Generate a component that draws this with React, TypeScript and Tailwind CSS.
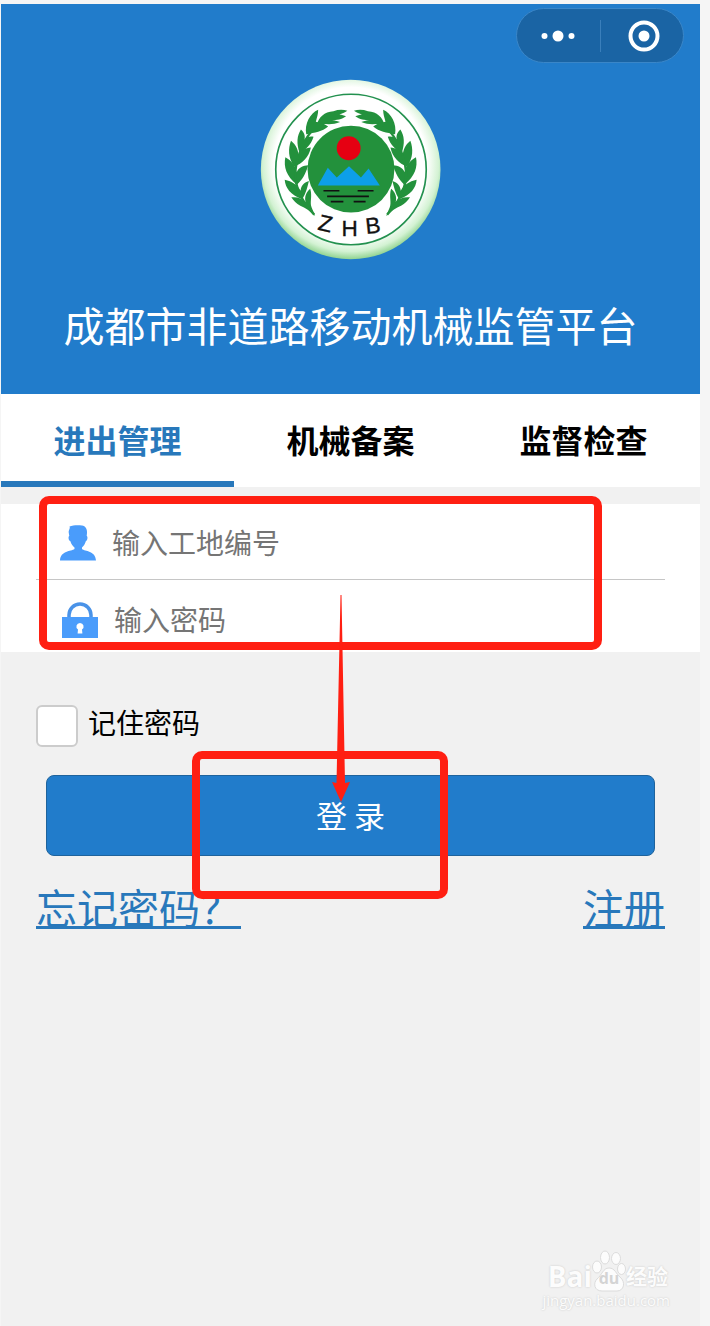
import { useState } from 'react';

const TABS = ['进出管理', '机械备案', '监督检查'];

// One side of the olive wreath, mirrored for the other side
const WREATH_LEAVES = [
  'M200 162C206 140 222 124 250 122C265 117 280 117 292 121C284 127 276 130 268 132C276 133 282 135 288 137C276 147 258 148 246 150C256 150 264 152 270 155C246 166 222 158 200 162Z',
  'M168 192C162 160 180 128 204 118C204 132 200 142 197 154C210 156 224 160 234 168C216 184 194 186 168 192Z',
  'M148 248C138 218 140 196 152 177C163 188 165 196 163 208C170 200 178 197 190 199C182 225 166 238 148 248Z',
  'M132 290C113 262 113 236 122 211C138 224 143 238 145 254C152 240 166 233 182 232C176 262 156 280 132 290Z',
  'M140 344C108 318 99 290 105 261C125 272 136 288 139 306C146 291 159 286 174 285C166 312 156 328 140 344Z',
  'M156 388C120 374 105 354 103 329C125 333 143 346 151 362C152 348 160 338 176 333C172 350 168 368 156 388Z',
  'M195 438C180 424 165 412 150 407C138 401 130 393 123 382C140 380 156 384 166 396C162 380 168 366 180 356C187 380 178 396 184 412Z',
];

function Wreath() {
  return (
    <>
      {WREATH_LEAVES.map((d) => (
        <path key={d} d={d} />
      ))}
      <path
        d="M192 434C150 390 126 340 138 284C148 236 168 190 210 158"
        fill="none"
        stroke="#23913c"
        strokeWidth="7"
      />
    </>
  );
}

function Emblem() {
  return (
    <svg viewBox="30 25 543 546" className="mt-4 h-[181px] w-[181px]" role="img" aria-label="ZHB">
      <defs>
        <radialGradient id="rim" gradientUnits="userSpaceOnUse" cx="302" cy="280" r="295">
          <stop offset="0.78" stopColor="#ffffff" />
          <stop offset="0.9" stopColor="#d3f2d3" />
          <stop offset="1" stopColor="#7fcb7f" />
        </radialGradient>
      </defs>
      <circle cx="302" cy="298" r="271" fill="url(#rim)" />
      <circle cx="303" cy="298" r="227" fill="#ffffff" stroke="#23914f" strokeWidth="5" />
      <circle cx="303" cy="297" r="131" fill="#23913c" />
      <circle cx="296" cy="234" r="36" fill="#e60012" />
      <path d="M203 346L233 293L260 322L297 288L333 322L356 295L390 346Z" fill="#0d9fe8" />
      <path
        d="M220 362H268M323 362H371M231 379H357M242 395H280M311 395H347"
        stroke="#111111"
        strokeWidth="5"
      />
      <g fill="#23913c">
        <Wreath />
        <g transform="translate(604 0) scale(-1 1)">
          <Wreath />
        </g>
      </g>
      <g
        fill="#111111"
        stroke="#111111"
        fontFamily="'Liberation Sans', Arial, sans-serif"
        fontSize="68"
        textAnchor="middle"
      >
        <text x="226" y="484" transform="rotate(13 226 460)">Z</text>
        <text x="299" y="498">H</text>
        <text x="369" y="490" transform="rotate(-6 369 466)">B</text>
      </g>
    </svg>
  );
}

function UserIcon() {
  return (
    <svg viewBox="0 0 36 36" className="size-9 shrink-0" fill="#4a9cfb" aria-hidden="true">
      <path d="M9.500 1.500C13 .2 18 0 22 .6C25.500 1.200 27.300 4 27 8L26.700 11C28 11.500 27.600 15.500 25.800 16.300C25 19.200 23.600 21 22 22.500V24C25 26.500 35.500 25.500 36 35.500H0C.5 25.500 11 26.500 14.500 24V22.500C12.600 21 11.200 19 10.400 16.300C8.400 15.500 8 11.500 9.300 11L8.700 7.500C8.500 5 10.500 3.500 9.500 1.500Z" />
    </svg>
  );
}

function LockIcon() {
  return (
    <svg viewBox="0 0 36 36" className="size-9 shrink-0" aria-hidden="true">
      <path d="M7 15.500V13A11 11 0 0 1 29 13V15.500" fill="none" stroke="#4a93e8" strokeWidth="3.500" />
      <rect y="15" width="36" height="21" fill="#4a9cfb" />
      <path
        d="M18 21A3.600 3.600 0 0 1 20 27.600L20.400 31.500H15.600L16 27.600A3.600 3.600 0 0 1 18 21Z"
        fill="#ffffff"
      />
    </svg>
  );
}

function Capsule() {
  return (
    <div className="mt-1 mr-4 flex h-[55px] w-[168px] items-center self-end rounded-full border border-[#3a86c8] bg-[#1a64a4]">
      <button type="button" aria-label="更多" className="flex h-full flex-1 items-center justify-center">
        <svg viewBox="0 0 34 12" className="h-3 w-[34px]" fill="#ffffff" aria-hidden="true">
          <circle cx="3.500" cy="6" r="3" />
          <circle cx="17" cy="6" r="5.500" />
          <circle cx="30.500" cy="6" r="3" />
        </svg>
      </button>
      <span className="h-8 w-px bg-[#3a7fbb]" />
      <button type="button" aria-label="关闭" className="flex h-full flex-1 items-center justify-center">
        <svg viewBox="0 0 32 32" className="ml-1 size-8" aria-hidden="true">
          <circle cx="16" cy="16" r="13.500" fill="none" stroke="#ffffff" strokeWidth="4" />
          <circle cx="16" cy="16" r="5.500" fill="#ffffff" />
        </svg>
      </button>
    </div>
  );
}

function Watermark() {
  return (
    <div className="mt-auto mr-[30px] mb-4 flex flex-col items-end font-['Open_Sans','Noto_Sans_CJK_SC',sans-serif] text-[#fcfcfc] [text-shadow:0_0_2px_#c4c4c4]">
      <div className="mr-0.5 flex h-10 items-end text-[28px] leading-7 font-bold">
        <span>Bai</span>
        <span className="relative flex h-10 w-[34px] items-end justify-center">
          <svg
            viewBox="0 0 34 42"
            className="absolute inset-0 h-[42px] w-[34px]"
            fill="#fcfcfc"
            stroke="#dcdcdc"
            aria-hidden="true"
          >
            <ellipse cx="5" cy="17" rx="4.500" ry="6" />
            <ellipse cx="13" cy="7.500" rx="4.500" ry="6.500" />
            <ellipse cx="24" cy="8.500" rx="4.500" ry="6" />
            <ellipse cx="29.500" cy="19" rx="4" ry="5.500" />
            <path d="M17 18C23 18 24 24 28 27C34 32 32 41 25 41H10C2 41 1 33 5 29C10 25 11 18 17 18Z" />
          </svg>
          <span className="relative text-base leading-6 text-[#d4d4d4] [text-shadow:none]">du</span>
        </span>
        <span className="text-[21px]">经验</span>
      </div>
      <div className="text-[15px] leading-5">jingyan.baidu.com</div>
    </div>
  );
}

export default function App() {
  const [activeTab, setActiveTab] = useState(0);
  const [remember, setRemember] = useState(false);

  return (
    <div className="flex min-h-screen bg-[#f5f5f5] pt-1 pr-[10px] pl-px font-['Noto_Sans_CJK_SC',sans-serif]">
      <main className="flex flex-1 flex-col bg-[#f1f1f1]">
        <header className="flex flex-col items-center bg-[#217ccb] pb-10">
          <Capsule />
          <Emblem />
          <h1 className="mt-[34px] text-[41px] leading-[60px] whitespace-nowrap text-white">
            成都市非道路移动机械监管平台
          </h1>
        </header>

        <nav className="flex bg-white">
          {TABS.map((tab, i) => (
            <button
              key={tab}
              type="button"
              onClick={() => setActiveTab(i)}
              className={`flex-1 border-b-6 pt-[21px] pb-[18px] text-[32px] leading-12 font-bold ${
                i === activeTab ? 'border-[#2878bb] text-[#2878bb]' : 'border-white text-black'
              }`}
            >
              {tab}
            </button>
          ))}
        </nav>

        <form onSubmit={(e) => e.preventDefault()}>
          <div className="relative mt-[17px] bg-white px-[35px]">
            <label className="flex items-center gap-4 border-b border-[#c6c6c6] pt-[7px] pb-1 pl-6">
              <UserIcon />
              <input
                type="text"
                aria-label="工地编号"
                placeholder="输入工地编号"
                className="h-16 min-w-0 flex-1 pb-0.5 text-[28px] outline-none placeholder:text-[#757575]"
              />
            </label>
            <label className="flex items-center gap-4 pt-2 pl-[26px]">
              <LockIcon />
              <input
                type="password"
                aria-label="密码"
                placeholder="输入密码"
                className="h-16 min-w-0 flex-1 pb-0.5 text-[28px] outline-none placeholder:text-[#757575]"
              />
            </label>
            <div className="pointer-events-none absolute -top-2 right-[98px] bottom-[2px] left-[38px] rounded-[10px] border-8 border-[#ff1f12]" />
          </div>

          <div className="px-[35px] pt-[53px]">
            <label className="flex w-fit items-center gap-[10px] text-[28px] text-black">
              <input
                type="checkbox"
                checked={remember}
                onChange={(e) => setRemember(e.target.checked)}
                className="size-[42px] appearance-none rounded-md border-2 border-[#cccccc] bg-white checked:bg-[#217ccb]"
              />
              <span className="pb-2 leading-[34px]">记住密码</span>
            </label>

            <div className="relative mx-[10px] mt-7">
              <button
                type="submit"
                className="block h-[81px] w-full rounded-lg border border-[#1f639c] bg-[#217ccb] text-[31px] text-white"
              >
                登 录
              </button>
              <div className="pointer-events-none absolute -top-6 right-[207px] -bottom-[43px] left-[146px] z-10 rounded-[10px] border-8 border-[#ff1f12]" />
              <svg
                viewBox="0 0 20 208"
                className="pointer-events-none absolute -top-[180px] left-[285px] z-10 h-[208px] w-5"
                fill="#ff1f12"
                aria-hidden="true"
              >
                <path d="M9.500 0H10.500L14 188L19 187L10 207L1 187L5.500 188Z" />
              </svg>
            </div>

            <div className="mt-[22px] flex justify-between text-[41px] leading-14 text-[#2878bb]">
              <a href="#forgot" className="underline decoration-3">
                忘记密码？
              </a>
              <a href="#register" className="underline decoration-3">
                注册
              </a>
            </div>
          </div>
        </form>

        <Watermark />
      </main>
    </div>
  );
}
